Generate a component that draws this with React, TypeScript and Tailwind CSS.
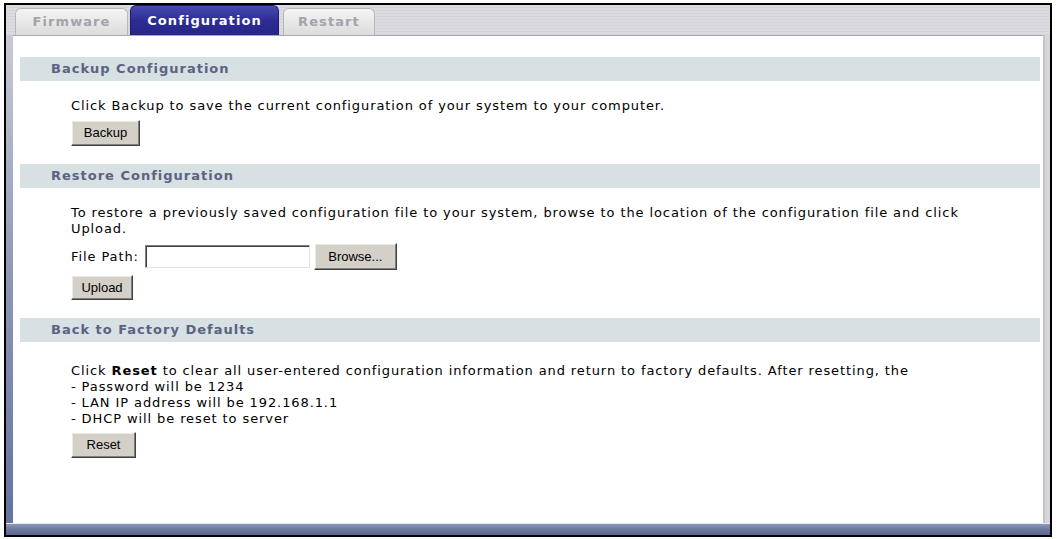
const bodyFont = { fontFamily: '"DejaVu Sans", Verdana, sans-serif' };
const btnFont = { fontFamily: '"Liberation Sans", Arial, sans-serif' };

function ClassicButton({ label, className = "" }: { label: string; className?: string }) {
  return (
    <button
      type="button"
      style={btnFont}
      className={`bg-[#d4d0c8] text-[13px] tracking-normal text-black border border-t-white border-l-white border-b-[#404040] border-r-[#404040] shadow-[inset_-1px_-1px_0_#808080,inset_1px_1px_0_#ece9e4] flex items-center justify-center ${className}`}
    >
      {label}
    </button>
  );
}

function SectionBar({ title }: { title: string }) {
  return (
    <div className="h-[24px] bg-[#d7e0e2] flex items-center pl-[31px]">
      <span className="text-[13px] tracking-[1px] font-bold text-[#5b6282]" style={bodyFont}>
        {title}
      </span>
    </div>
  );
}

function Tab({ label, active, className = "" }: { label: string; active?: boolean; className?: string }) {
  return (
    <div
      style={bodyFont}
      className={`flex items-center justify-center rounded-t-[6px] text-[13px] font-bold tracking-[1.1px] ${
        active
          ? "bg-gradient-to-b from-[#4a4ab0] via-[#2c2c95] to-[#262688] text-white border border-[#1e1e70] border-b-0"
          : "bg-gradient-to-b from-[#f4f4f4] to-[#dcdcdc] text-[#a3a3ab] border border-[#b8b8bc] border-b-0"
      } ${className}`}
    >
      {label}
    </div>
  );
}

export default function App() {
  return (
    <div className="pt-[3px] pl-[4px] bg-white w-[1059px] h-[539px]">
      <div className="w-[1048px] h-[534px] border-2 border-black flex flex-col bg-[repeating-linear-gradient(to_bottom,#dcdbe0_0px,#dcdbe0_2px,#d4d3d9_2px,#d4d3d9_3px)]">
        {/* tab strip */}
        <div className="h-[30px] flex items-end pl-[9px] shrink-0">
          <Tab label="Firmware" className="w-[113px] h-[27px]" />
          <Tab label="Configuration" active className="w-[149px] h-[30px] ml-[2px]" />
          <Tab label="Restart" className="w-[92px] h-[27px] ml-[4px]" />
        </div>

        <div className="flex-1 flex min-h-0">
          <div className="w-[7px] bg-gradient-to-b from-[#c9cad2] via-[#8e97b4] to-[#6473a0]" />
          <div className="flex-1 bg-white border-t border-[#a9a9b0] pt-[21px] pl-[7px] pr-[3px]" style={bodyFont}>
            <SectionBar title="Backup Configuration" />
            <div className="pl-[51px] pt-[17px] pb-[18px] text-[13px] tracking-[0.9px] leading-[16px] text-black">
              <div>Click Backup to save the current configuration of your system to your computer.</div>
              <ClassicButton label="Backup" className="w-[69px] h-[26px] mt-[6px]" />
            </div>

            <SectionBar title="Restore Configuration" />
            <div className="pl-[51px] pt-[17px] pb-[18px] text-[13px] tracking-[0.9px] leading-[16px] text-black">
              <div className="whitespace-nowrap">
                To restore a previously saved configuration file to your system, browse to the location of the configuration file and click
                <br />
                Upload.
              </div>
              <div className="flex items-center mt-[6px]">
                <span>File Path:</span>
                <input
                  type="text"
                  className="ml-[6px] w-[165px] h-[23px] bg-white border border-t-[#808080] border-l-[#808080] border-b-[#e4e2dc] border-r-[#e4e2dc] shadow-[inset_1px_1px_0_#404040] outline-none"
                />
                <ClassicButton label="Browse..." className="w-[83px] h-[27px] ml-[4px]" />
              </div>
              <ClassicButton label="Upload" className="w-[62px] h-[25px] mt-[5px]" />
            </div>

            <SectionBar title="Back to Factory Defaults" />
            <div className="pl-[51px] pt-[21px] text-[13px] tracking-[0.9px] leading-[16px] text-black">
              <div>
                Click <b>Reset</b> to clear all user-entered configuration information and return to factory defaults. After resetting, the
              </div>
              <div>- Password will be 1234</div>
              <div>- LAN IP address will be 192.168.1.1</div>
              <div>- DHCP will be reset to server</div>
              <ClassicButton label="Reset" className="w-[65px] h-[26px] mt-[5px]" />
            </div>
          </div>
          <div className="w-[7px] bg-[#d6d6da] border-l-2 border-[#c4c4c9]" />
        </div>

        <div className="h-[12px] shrink-0 bg-gradient-to-b from-[#8d98b6] via-[#6a789f] to-[#5a6890] border-t border-[#e6e8ee]" />
      </div>
    </div>
  );
}
